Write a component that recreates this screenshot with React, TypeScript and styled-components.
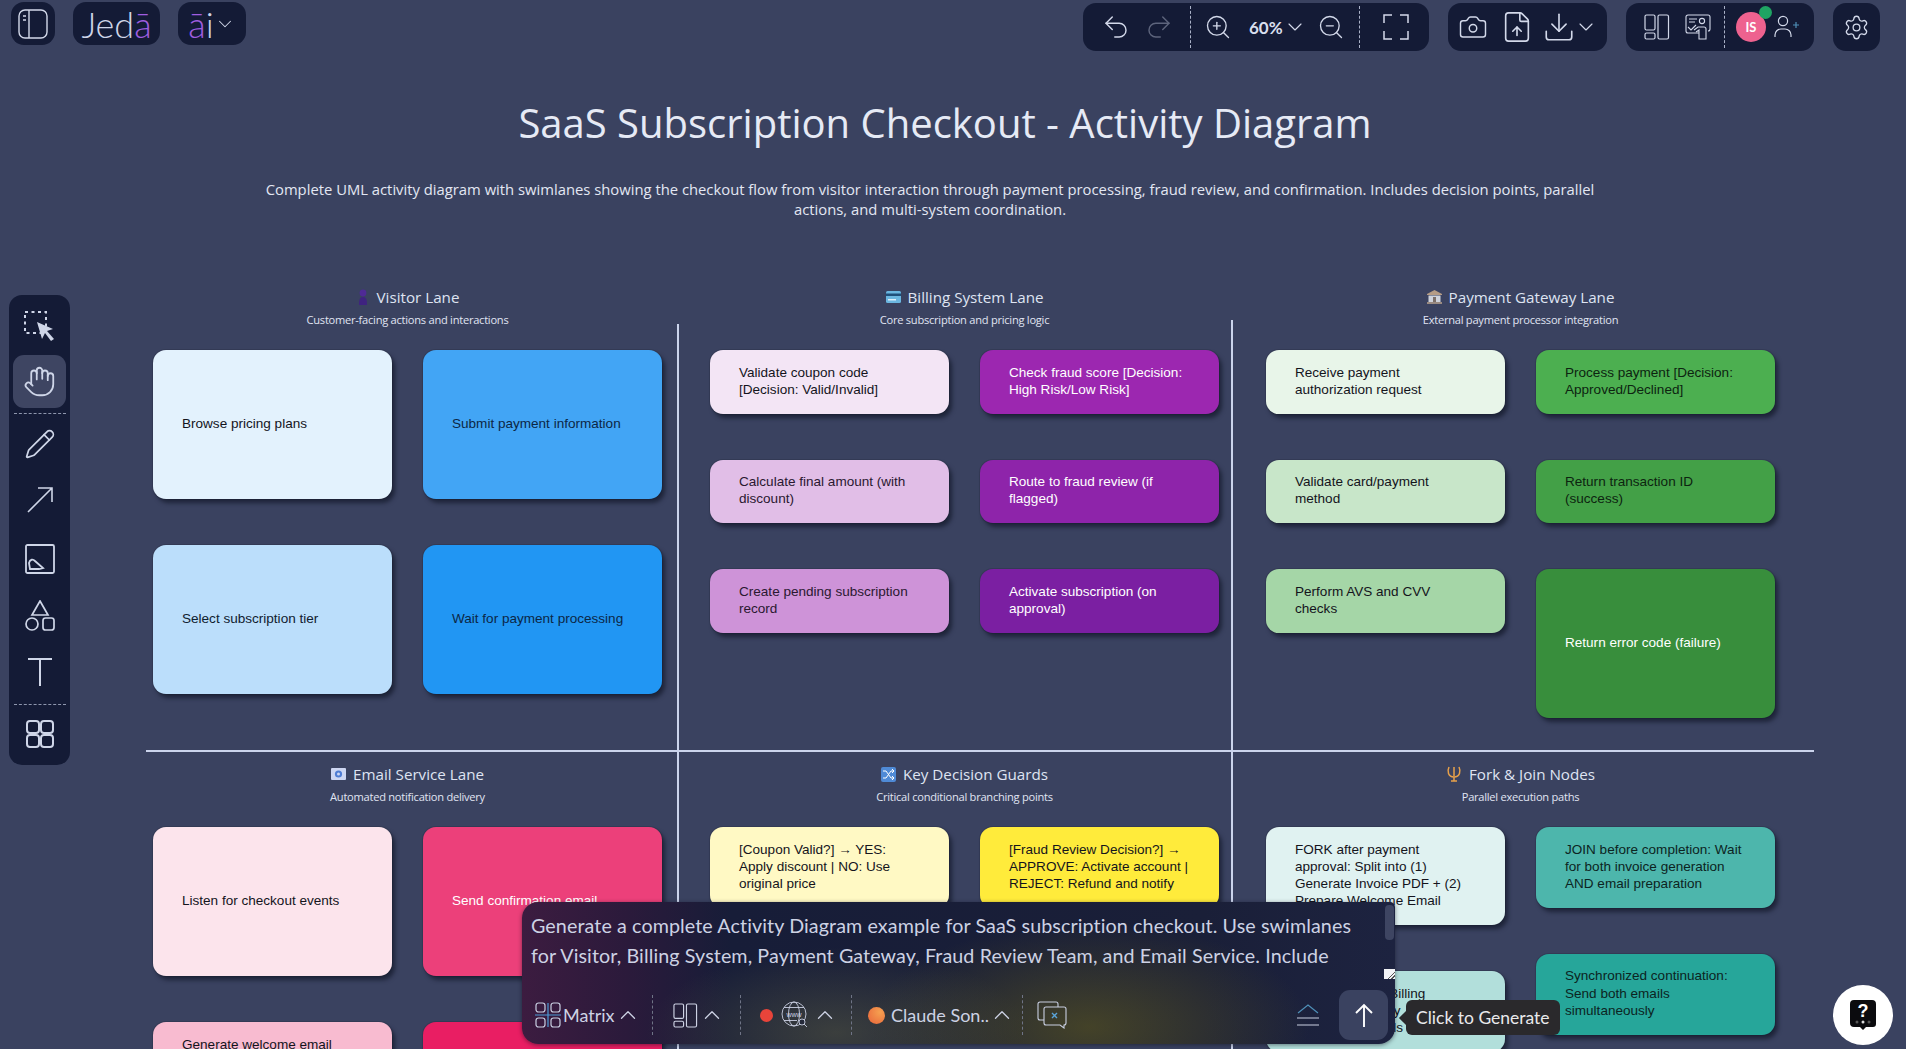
import React from "react";
import styled, { createGlobalStyle } from "styled-components";
import {
  Undo2, Redo2, ZoomIn, ZoomOut, ChevronDown, ChevronUp, Camera, FileUp, Download,
  Settings, Pencil, Hand,
} from "lucide-react";

const Global = createGlobalStyle`
  html, body { margin: 0; padding: 0; height: 100%; overflow: hidden; background: #3a4260; }
  * { box-sizing: border-box; }
`;

const Page = styled.div`
  position: relative;
  width: 1906px;
  height: 1049px;
  overflow: hidden;
  background: #3a4260;
  font-family: "Open Sans", "Liberation Sans", sans-serif;
`;

const TopBar = styled.header`
  display: flex;
  justify-content: space-between;
  align-items: flex-start;
  height: 54px;
  padding: 2px 26px 0 11px;
`;

const BarSide = styled.div<{ $gap: number }>`
  display: flex;
  align-items: flex-start;
  gap: ${(p) => p.$gap}px;
`;

const BarTile = styled.div<{ $w: number; $tall?: boolean }>`
  display: flex;
  align-items: center;
  justify-content: center;
  width: ${(p) => p.$w}px;
  height: ${(p) => (p.$tall ? 48 : 43)}px;
  margin-top: ${(p) => (p.$tall ? 1 : 0)}px;
  border-radius: 13px;
  background: #141b36;
  color: #d3d9ea;
`;

const BrandText = styled.span`
  font-family: Lato, "Open Sans", sans-serif;
  font-weight: 300;
  font-size: 36px;
  line-height: 1;
  color: #cfd5e8;
`;

const Accent = styled.span`
  color: #a05ee0;
`;

const BarPanel = styled.div<{ $w: number }>`
  display: flex;
  align-items: center;
  width: ${(p) => p.$w}px;
  height: 48px;
  margin-top: 1px;
  border-radius: 13px;
  background: #141b36;
  color: #d3d9ea;
`;

const Slot = styled.span<{ $ml?: number; $dim?: boolean }>`
  display: flex;
  align-items: center;
  flex: none;
  margin-left: ${(p) => p.$ml ?? 0}px;
  color: ${(p) => (p.$dim ? "#5d647c" : "inherit")};
`;

const BarDivider = styled.i<{ $ml: number }>`
  align-self: stretch;
  margin: 3px 0 3px ${(p) => p.$ml}px;
  border-left: 1px dashed #aab2c8;
`;

const Zoom = styled.span`
  flex: none;
  width: 34px;
  margin-left: 17px;
  font-family: Lato, "Open Sans", sans-serif;
  font-weight: 700;
  font-size: 17px;
  color: #d9dfee;
`;

const AvatarWrap = styled.div`
  position: relative;
  display: flex;
  align-items: center;
  justify-content: center;
  flex: none;
  width: 30px;
  height: 30px;
  margin-left: 11px;
  border-radius: 50%;
  background: #ee628f;
  color: #fff;
  font-family: Lato, sans-serif;
  font-weight: 700;
  font-size: 13px;
`;

const OnlineDot = styled.i`
  position: absolute;
  top: -6px;
  right: -6px;
  width: 13px;
  height: 13px;
  border-radius: 50%;
  background: #1fa463;
`;

const Heading = styled.h1`
  margin: 42px 16px 0 0;
  text-align: center;
  font-weight: 400;
  font-size: 40px;
  line-height: 54px;
  color: #e6eaf5;
`;

const Lead = styled.p`
  width: 1430px;
  margin: 29px 0 0 215px;
  text-align: center;
  font-size: 14.8px;
  line-height: 20px;
  color: #e3e7f3;
  white-space: pre-line;
`;

const Diagram = styled.main`
  display: grid;
  grid-template-columns: 533px 554px 581px;
  grid-template-rows: 479px auto;
  margin: 54px 0 0 146px;
  width: 1668px;
`;

const Lane = styled.section<{ $top?: boolean; $rule?: boolean }>`
  display: flex;
  flex-direction: column;
  border-bottom: ${(p) => (p.$top ? "2px solid #cbd4ec" : "none")};
  border-right: ${(p) => (p.$rule ? "2px solid #cbd4ec" : "none")};
  height: ${(p) => (p.$top ? "auto" : "320px")};
`;

const LaneHead = styled.div<{ $inset: number; $offset: number }>`
  width: ${(p) => p.$inset + 509}px;
  padding: ${(p) => p.$offset}px 0 0 ${(p) => p.$inset}px;
  text-align: center;
`;

const LaneName = styled.h2`
  display: flex;
  align-items: center;
  justify-content: center;
  gap: 7px;
  margin: 0;
  font-weight: 400;
  font-size: 15.2px;
  line-height: 22px;
  color: #dfe4f2;
`;

const LaneNote = styled.p`
  margin: 3px 0 0;
  font-size: 11.1px;
  line-height: 18px;
  letter-spacing: -0.25px;
  color: #e0e5f3;
`;

const LaneBody = styled.div<{ $inset: number; $ruleGap: number; $cardTop: number; $rule?: boolean }>`
  display: grid;
  grid-template-columns: 239px 239px;
  column-gap: 31px;
  align-items: start;
  flex: 1;
  margin-top: ${(p) => p.$cardTop - p.$ruleGap}px;
  padding: ${(p) => p.$ruleGap}px 0 0 ${(p) => p.$inset}px;
  border-right: ${(p) => (p.$rule ? "2px solid #cbd4ec" : "none")};
`;

const CardColumn = styled.div`
  display: flex;
  flex-direction: column;
  gap: 46px;
`;

const Card = styled.div<{ $bg: string; $fg?: string; $tall?: boolean }>`
  display: flex;
  align-items: center;
  flex: none;
  min-height: ${(p) => (p.$tall ? "149px" : "auto")};
  padding: 13.5px 29px 15.5px;
  border-radius: 13px;
  background: ${(p) => p.$bg};
  color: ${(p) => p.$fg ?? "#14141c"};
  box-shadow: 3px 4px 4px rgba(12, 16, 32, 0.6), 0 0 0 1px rgba(20, 20, 30, 0.14);
  font-family: "Liberation Sans", Arial, sans-serif;
  font-size: 13.55px;
  line-height: 17.3px;
  white-space: pre-line;
`;

const ToolRail = styled.nav`
  position: absolute;
  left: 9px;
  top: 295px;
  display: flex;
  flex-direction: column;
  align-items: center;
  width: 61px;
  height: 470px;
  padding-top: 6px;
  border-radius: 13px;
  background: #141b36;
  color: #cfd6e8;
`;

const Tool = styled.div<{ $h: number; $active?: boolean; $mt?: number }>`
  display: flex;
  align-items: center;
  justify-content: center;
  width: 53px;
  height: ${(p) => p.$h}px;
  margin-top: ${(p) => p.$mt ?? 0}px;
  border-radius: 11px;
  background: ${(p) => (p.$active ? "#3e4562" : "transparent")};
`;

const RailDivider = styled.i<{ $top: number }>`
  width: 52px;
  margin-top: ${(p) => p.$top}px;
  border-top: 1px dashed #8e96ad;
`;

const Prompt = styled.form`
  position: absolute;
  left: 522px;
  top: 902px;
  width: 873px;
  height: 142px;
  border-radius: 16px 5px 16px 16px;
  background:
    radial-gradient(ellipse 220px 105px at 65% 88%, rgba(96, 90, 30, 0.6), transparent),
    radial-gradient(ellipse 190px 85px at 36% 92%, rgba(88, 90, 66, 0.55), transparent),
    linear-gradient(90deg, #3c1c40 0%, #2b1a3b 12%, #171d38 24%, #1a1f38 78%, #1d2340 100%);
  box-shadow: 0 1px 4px rgba(10, 12, 24, 0.5);
  color: #cdd2e4;
  font-family: Lato, "Open Sans", sans-serif;
`;

const PromptText = styled.p`
  height: 82px;
  margin: 0;
  padding: 9px 0 0 9px;
  font-size: 19.7px;
  line-height: 30px;
  letter-spacing: 0.1px;
  white-space: pre-line;
`;

const ScrollThumb = styled.i`
  position: absolute;
  right: 1px;
  top: 3px;
  width: 9px;
  height: 35px;
  border-radius: 4px;
  background: #3e4562;
`;

const Resizer = styled.i`
  position: absolute;
  right: 0;
  top: 67px;
  width: 11px;
  height: 10px;
  background:
    linear-gradient(135deg, transparent 62%, #555 62%, #555 70%, transparent 70%, transparent 80%, #555 80%, #555 88%, transparent 88%),
    #f2f3f6;
`;

const PromptBar = styled.div`
  display: flex;
  align-items: center;
  height: 60px;
  padding: 2px 7px 0 13px;
`;

const BarLabel = styled.span<{ $ml: number }>`
  flex: none;
  margin-left: ${(p) => p.$ml}px;
  font-size: 18px;
  color: #cdd2e4;
  white-space: nowrap;
`;

const PromptGroup = styled.div<{ $w: number }>`
  display: flex;
  align-items: center;
  flex: none;
  width: ${(p) => p.$w}px;
`;

const PromptDivider = styled.i`
  flex: none;
  height: 40px;
  margin-right: 14px;
  border-left: 1px dashed #6f7486;
`;

const Spacer = styled.div`
  flex: 1;
`;

const ColorDot = styled.i<{ $size: number; $bg: string; $ml: number }>`
  flex: none;
  width: ${(p) => p.$size}px;
  height: ${(p) => p.$size}px;
  margin-left: ${(p) => p.$ml}px;
  border-radius: 50%;
  background: ${(p) => p.$bg};
`;

const SendButton = styled.button`
  display: flex;
  align-items: center;
  justify-content: center;
  width: 49px;
  height: 50px;
  margin-left: 20px;
  padding: 0;
  border: none;
  border-radius: 11px;
  background: #3a4260;
  color: #fff;
`;

const Tip = styled.div`
  position: absolute;
  left: 1406px;
  top: 1000px;
  display: flex;
  align-items: center;
  width: 154px;
  height: 35px;
  padding-left: 10px;
  border-radius: 6px;
  background: #2a292c;
  color: #e9e9ec;
  font-family: Lato, "Open Sans", sans-serif;
  font-size: 17.5px;
  white-space: nowrap;
  &::before {
    content: "";
    position: absolute;
    left: -5px;
    top: 13px;
    width: 10px;
    height: 10px;
    background: #2a292c;
    transform: rotate(45deg);
  }
`;

const Help = styled.div`
  position: absolute;
  left: 1833px;
  top: 985px;
  display: flex;
  align-items: center;
  justify-content: center;
  width: 60px;
  height: 60px;
  border-radius: 50%;
  background: #fff;
`;

const S = 1.15;

const SidebarIcon = () => (
  <svg width="30" height="30" viewBox="0 0 30 30" fill="none" stroke="currentColor" strokeWidth="1.4">
    <rect x="1" y="1" width="28" height="28" rx="6" />
    <path d="M11 1v28M5 7h3M5 11h3" />
  </svg>
);
const Fullscreen = () => (
  <svg width="26" height="26" viewBox="0 0 26 26" fill="none" stroke="currentColor" strokeWidth="1.5">
    <path d="M1 9V1h8M17 1h8v8M25 17v8h-8M9 25H1v-8" />
  </svg>
);
const LayoutIcon = ({ size = 26 }: { size?: number }) => (
  <svg width={size} height={size} viewBox="0 0 26 26" fill="none" stroke="currentColor" strokeWidth="1.2">
    <rect x="1" y="1" width="10" height="15" rx="1.5" />
    <rect x="1" y="19" width="10" height="6" rx="1.5" />
    <rect x="14" y="1" width="10.5" height="24" rx="1.5" />
  </svg>
);
const Presenter = () => (
  <svg width="26" height="26" viewBox="0 0 26 26" fill="none" stroke="currentColor" strokeWidth="1.1">
    <path d="M14 19H3a2 2 0 0 1-2-2V3a2 2 0 0 1 2-2h20a2 2 0 0 1 2 2v12a2 2 0 0 1-2 2" />
    <path d="M4 5h8M4 8h6M3 13l3 3 5-5" />
    <circle cx="17" cy="7" r="2.6" />
    <path d="M9 16l4-3 3 0h3a2 2 0 0 1 2 2v10h-7v-9l-3 2" />
  </svg>
);
const AddUser = () => (
  <svg width="25" height="24" viewBox="0 0 25 24" fill="none" stroke="currentColor" strokeWidth="1.2">
    <circle cx="9" cy="6" r="4.6" />
    <path d="M1 22v-2a6 6 0 0 1 6-6h4a6 6 0 0 1 6 6v2" />
    <path d="M19 10h6M22 7v6" stroke="#4f90b8" />
  </svg>
);
const SelectTool = () => (
  <svg width="32" height="32" viewBox="0 0 32 32" fill="none">
    <rect x="1" y="1" width="21" height="21" stroke="currentColor" strokeWidth="2" strokeDasharray="3 3.5" />
    <path d="M13 11l16 7-6 2 7 8-3 2-6-8-3 6z" fill="currentColor" />
  </svg>
);
const ArrowTool = () => (
  <svg width="28" height="28" viewBox="0 0 28 28" fill="none" stroke="currentColor" strokeWidth="1.6">
    <path d="M2 26L26 2M12 2h14v14" />
  </svg>
);
const ImageTool = () => (
  <svg width="30" height="30" viewBox="0 0 30 30" fill="none" stroke="currentColor" strokeWidth="1.8">
    <rect x="1" y="1" width="28" height="28" rx="1.5" />
    <path d="M4 19c1-4 4-4 6-2l8 7-4 1H5z" />
  </svg>
);
const ShapesTool = () => (
  <svg width="30" height="32" viewBox="0 0 30 32" fill="none" stroke="currentColor" strokeWidth="1.7">
    <path d="M15 1l8 14H7z" />
    <circle cx="7" cy="24" r="6" />
    <rect x="18" y="18" width="11" height="12" rx="2.5" />
  </svg>
);
const TextTool = () => (
  <svg width="26" height="30" viewBox="0 0 26 30" fill="none" stroke="currentColor" strokeWidth="2">
    <path d="M1 2h24M13 2v27" />
  </svg>
);
const GridTool = () => (
  <svg width="28" height="28" viewBox="0 0 28 28" fill="none" stroke="currentColor" strokeWidth="2">
    <rect x="1" y="1" width="12" height="12" rx="3" />
    <rect x="15" y="1" width="12" height="12" rx="3" />
    <rect x="1" y="15" width="12" height="12" rx="3" />
    <rect x="15" y="15" width="12" height="12" rx="3" />
  </svg>
);
const MatrixIcon = () => (
  <svg width="26" height="26" viewBox="0 0 26 26" fill="none" stroke="#c9cfe2" strokeWidth="1.2">
    <rect x="1" y="1" width="9" height="9" rx="2.5" />
    <rect x="16" y="1" width="9" height="9" rx="2.5" />
    <rect x="1" y="16" width="9" height="9" rx="2.5" />
    <rect x="16" y="16" width="9" height="9" rx="2.5" />
    <path d="M13 1v24M0 13h26" stroke="#4d9bd6" />
  </svg>
);
const WebIcon = () => (
  <svg width="28" height="28" viewBox="0 0 28 28" fill="none" stroke="#c9cfe2" strokeWidth="0.9">
    <circle cx="13" cy="13" r="12" />
    <ellipse cx="13" cy="13" rx="5.5" ry="12" />
    <path d="M3 6.5h20M3 19.5h13" />
    <text x="13" y="15.5" fontSize="7" textAnchor="middle" fill="#c9cfe2" stroke="none" fontFamily="Liberation Sans">www</text>
    <circle cx="21" cy="21" r="3" fill="#252a3a" />
    <path d="M23 23l3 3" />
  </svg>
);
const ChatX = () => (
  <svg width="30" height="28" viewBox="0 0 30 28" fill="none" stroke="#c9cfe2" strokeWidth="1.1">
    <path d="M7 19H3a2 2 0 0 1-2-2V3a2 2 0 0 1 2-2h16a2 2 0 0 1 2 2v3" />
    <path d="M9 6h18a2 2 0 0 1 2 2v14a2 2 0 0 1-2 2v3l-4-3H9a2 2 0 0 1-2-2V8a2 2 0 0 1 2-2z" />
    <path d="M15 12l5 5M20 12l-5 5" stroke="#5aa3d8" strokeWidth="1.4" />
  </svg>
);
const Stack = () => (
  <svg width="22" height="24" viewBox="0 0 22 24" fill="none" strokeWidth="1.2">
    <path d="M1 10l10-8 10 8" stroke="#4f90b8" />
    <path d="M0 15h22M0 22h22" stroke="#c9cfe2" />
  </svg>
);
const SendArrow = () => (
  <svg width="18" height="25" viewBox="0 0 18 25" fill="none" stroke="currentColor" strokeWidth="1.9">
    <path d="M9 24V2M1 10l8-8 8 8" />
  </svg>
);
const HelpIcon = () => (
  <svg width="26" height="30" viewBox="0 0 26 30">
    <path d="M4 0h18a4 4 0 0 1 4 4v20a3 3 0 0 1-3 3h-7l-3 3-3-3H4a4 4 0 0 1-4-4V4a4 4 0 0 1 4-4z" fill="#0b0b0e" />
    <text x="13" y="17" fontSize="18" fontWeight="700" textAnchor="middle" fill="#fff" fontFamily="Liberation Sans">?</text>
    <circle cx="7" cy="22" r="1.5" fill="#555" />
    <circle cx="13" cy="22" r="1.5" fill="#ddd" />
    <circle cx="19" cy="22" r="1.5" fill="#555" />
  </svg>
);

const VisitorGlyph = () => (
  <svg width="14" height="16" viewBox="0 0 14 16">
    <circle cx="7" cy="4" r="3.4" fill="#4f2a96" />
    <path d="M3 16c0-6 1-8 4-8s4 2 4 8z" fill="#3f2380" />
  </svg>
);
const CardGlyph = () => (
  <svg width="15" height="12" viewBox="0 0 15 12">
    <rect width="15" height="12" rx="1.5" fill="#6bb6e0" />
    <rect y="2.5" width="15" height="2.5" fill="#1f4f7a" />
    <rect x="2" y="8" width="8" height="1.5" fill="#dceefa" />
  </svg>
);
const BankGlyph = () => (
  <svg width="15" height="14" viewBox="0 0 15 14">
    <path d="M7.5 0L15 4v1H0V4z" fill="#b59c86" />
    <rect x="1.5" y="5.5" width="12" height="6.5" fill="#cfd3dc" />
    <rect x="6" y="7" width="3" height="5" fill="#7c6f69" />
    <rect y="12" width="15" height="2" fill="#9a8b82" />
  </svg>
);
const MailGlyph = () => (
  <svg width="15" height="12" viewBox="0 0 15 12">
    <rect width="15" height="12" rx="1" fill="#cdd6f2" />
    <circle cx="7.5" cy="6" r="3.6" fill="#4f7dd4" />
    <circle cx="7.5" cy="6" r="1.5" fill="#cdd6f2" />
  </svg>
);
const ShuffleGlyph = () => (
  <svg width="15" height="15" viewBox="0 0 15 15" fill="none">
    <rect width="15" height="15" rx="2" fill="#4f8ad6" />
    <path d="M2 4h3l5 7h3M2 11h3l5-7h3M11 2l2 2-2 2M11 9l2 2-2 2" stroke="#fff" strokeWidth="1" />
  </svg>
);
const TridentGlyph = () => (
  <svg width="16" height="16" viewBox="0 0 16 16" fill="none" stroke="#e8a14a" strokeWidth="1.5">
    <path d="M8 1v9M3 1C1 5 2 11 8 11s7-6 5-10M5 15h6M8 11v4" />
  </svg>
);

type CardDef = { t: string; bg: string; fg?: string; tall?: boolean };
type LaneDef = {
  name: string;
  note: string;
  glyph: React.ReactNode;
  inset: number;
  rule?: boolean;
  top?: boolean;
  ruleGap: number;
  cols: CardDef[][];
};

const W = "#ffffff";
const NAVY = "#0c2746";

const lanes: LaneDef[] = [
  {
    name: "Visitor Lane", note: "Customer-facing actions and interactions", glyph: <VisitorGlyph />, inset: 7, rule: true, top: true, ruleGap: 26,
    cols: [
      [{ t: "Browse pricing plans", bg: "#e3f2fd", tall: true }, { t: "Select subscription tier", bg: "#bbdefb", fg: "#10202f", tall: true }],
      [{ t: "Submit payment information", bg: "#42a5f5", fg: NAVY, tall: true }, { t: "Wait for payment processing", bg: "#2196f3", fg: NAVY, tall: true }],
    ],
  },
  {
    name: "Billing System Lane", note: "Core subscription and pricing logic", glyph: <CardGlyph />, inset: 31, rule: true, top: true, ruleGap: 30,
    cols: [
      [
        { t: "Validate coupon code\n[Decision: Valid/Invalid]", bg: "#f3e5f5" },
        { t: "Calculate final amount (with\ndiscount)", bg: "#e1bee7", fg: "#2a1830" },
        { t: "Create pending subscription\nrecord", bg: "#ce93d8", fg: "#2a1830" },
      ],
      [
        { t: "Check fraud score [Decision:\nHigh Risk/Low Risk]", bg: "#9c27b0", fg: W },
        { t: "Route to fraud review (if\nflagged)", bg: "#8e24aa", fg: W },
        { t: "Activate subscription (on\napproval)", bg: "#7b1fa2", fg: W },
      ],
    ],
  },
  {
    name: "Payment Gateway Lane", note: "External payment processor integration", glyph: <BankGlyph />, inset: 33, top: true, ruleGap: 26,
    cols: [
      [
        { t: "Receive payment\nauthorization request", bg: "#e8f5e9" },
        { t: "Validate card/payment\nmethod", bg: "#c8e6c9" },
        { t: "Perform AVS and CVV\nchecks", bg: "#a5d6a7" },
      ],
      [
        { t: "Process payment [Decision:\nApproved/Declined]", bg: "#4caf50", fg: "#0d2410" },
        { t: "Return transaction ID\n(success)", bg: "#43a047", fg: "#0d2410" },
        { t: "Return error code (failure)", bg: "#388e3c", fg: W, tall: true },
      ],
    ],
  },
  {
    name: "Email Service Lane", note: "Automated notification delivery", glyph: <MailGlyph />, inset: 7, rule: true, ruleGap: 20,
    cols: [
      [{ t: "Listen for checkout events", bg: "#fce4ec", tall: true }, { t: "Generate welcome email\ncontent with\nsubscription details\nand onboarding links", bg: "#f8bbd0" }],
      [{ t: "Send confirmation email", bg: "#ec407a", fg: W, tall: true }, { t: "Send invoice email", bg: "#e91e63", fg: W, tall: true }],
    ],
  },
  {
    name: "Key Decision Guards", note: "Critical conditional branching points", glyph: <ShuffleGlyph />, inset: 31, rule: true, ruleGap: 20,
    cols: [
      [
        { t: "[Coupon Valid?] → YES:\nApply discount | NO: Use\noriginal price", bg: "#fff9c4" },
        { t: "[Paid?] → YES: Continue\n| NO: Show error and\nretry", bg: "#fff59d" },
      ],
      [
        { t: "[Fraud Review Decision?] →\nAPPROVE: Activate account |\nREJECT: Refund and notify", bg: "#ffeb3b" },
        { t: "[Risk Score?] → HIGH: Route\nto review | LOW: Continue\nto activation", bg: "#fdd835" },
      ],
    ],
  },
  {
    name: "Fork & Join Nodes", note: "Parallel execution paths", glyph: <TridentGlyph />, inset: 33, ruleGap: 20,
    cols: [
      [
        { t: "FORK after payment\napproval: Split into (1)\nGenerate Invoice PDF + (2)\nPrepare Welcome Email", bg: "#e0f2f1" },
        { t: "Parallel update Billing\nUpdate Company\ncustomer's details", bg: "#b2dfdb" },
      ],
      [
        { t: "JOIN before completion: Wait\nfor both invoice generation\nAND email preparation", bg: "#4db6ac", fg: "#0c2422" },
        { t: "Synchronized continuation:\nSend both emails\nsimultaneously", bg: "#26a69a", fg: "#0c2422" },
      ],
    ],
  },
];

export default function App() {
  return (
    <Page>
      <Global />
      <TopBar>
        <BarSide $gap={18}>
          <BarTile $w={44}><SidebarIcon /></BarTile>
          <BarTile $w={87}>
            <BrandText>Jed<Accent>ā</Accent></BrandText>
          </BarTile>
          <BarTile $w={68}>
            <BrandText><Accent>ā</Accent>i</BrandText>
            <ChevronDown size={22} strokeWidth={S} />
          </BarTile>
        </BarSide>
        <BarSide $gap={19}>
          <BarPanel $w={346}>
            <Slot $ml={18}><Undo2 size={30} strokeWidth={S} /></Slot>
            <Slot $ml={13} $dim><Redo2 size={30} strokeWidth={S} /></Slot>
            <BarDivider $ml={16} />
            <Slot $ml={13}><ZoomIn size={28} strokeWidth={S} /></Slot>
            <Zoom>60%</Zoom>
            <Slot><ChevronDown size={24} strokeWidth={S} /></Slot>
            <Slot $ml={10}><ZoomOut size={28} strokeWidth={S} /></Slot>
            <BarDivider $ml={14} />
            <Slot $ml={23}><Fullscreen /></Slot>
          </BarPanel>
          <BarPanel $w={159}>
            <Slot $ml={10}><Camera size={30} strokeWidth={S} /></Slot>
            <Slot $ml={12}><FileUp size={34} strokeWidth={S} /></Slot>
            <Slot $ml={8}><Download size={34} strokeWidth={S} /></Slot>
            <Slot $ml={-2}><ChevronDown size={24} strokeWidth={S} /></Slot>
          </BarPanel>
          <BarPanel $w={188}>
            <Slot $ml={18}><LayoutIcon /></Slot>
            <Slot $ml={15}><Presenter /></Slot>
            <BarDivider $ml={13} />
            <AvatarWrap>IS<OnlineDot /></AvatarWrap>
            <Slot $ml={8}><AddUser /></Slot>
          </BarPanel>
          <BarTile $w={47} $tall>
            <Settings size={27} strokeWidth={S} />
          </BarTile>
        </BarSide>
      </TopBar>

      <Heading>SaaS Subscription Checkout - Activity Diagram</Heading>
      <Lead>
        {"Complete UML activity diagram with swimlanes showing the checkout flow from visitor interaction through payment processing, fraud review, and confirmation. Includes decision points, parallel\nactions, and multi-system coordination."}
      </Lead>

      <Diagram>
        {lanes.map((l) => (
          <Lane key={l.name} $top={l.top} $rule={!l.top && l.rule}>
            <LaneHead $inset={l.inset} $offset={l.top ? 13 : 11}>
              <LaneName>{l.glyph}{l.name}</LaneName>
              <LaneNote>{l.note}</LaneNote>
            </LaneHead>
            <LaneBody $inset={l.inset} $ruleGap={l.ruleGap} $cardTop={21} $rule={l.top && l.rule}>
              {l.cols.map((col, i) => (
                <CardColumn key={i}>
                  {col.map((c) => (
                    <Card key={c.t} $bg={c.bg} $fg={c.fg} $tall={c.tall}>{c.t}</Card>
                  ))}
                </CardColumn>
              ))}
            </LaneBody>
          </Lane>
        ))}
      </Diagram>

      <ToolRail>
        <Tool $h={52}><SelectTool /></Tool>
        <Tool $h={53} $active $mt={2}><Hand size={33} strokeWidth={1.3} /></Tool>
        <RailDivider $top={5} />
        <Tool $h={52} $mt={4}><Pencil size={32} strokeWidth={1.3} /></Tool>
        <Tool $h={60}><ArrowTool /></Tool>
        <Tool $h={58}><ImageTool /></Tool>
        <Tool $h={56}><ShapesTool /></Tool>
        <Tool $h={56}><TextTool /></Tool>
        <RailDivider $top={4} />
        <Tool $h={58}><GridTool /></Tool>
      </ToolRail>

      <Prompt>
        <PromptText>
          {"Generate a complete Activity Diagram example for SaaS subscription checkout. Use swimlanes\nfor Visitor, Billing System, Payment Gateway, Fraud Review Team, and Email Service. Include"}
        </PromptText>
        <ScrollThumb />
        <Resizer />
        <PromptBar>
          <PromptGroup $w={117}>
            <MatrixIcon />
            <BarLabel $ml={2}>Matrix</BarLabel>
            <ChevronUp size={26} strokeWidth={1.2} />
          </PromptGroup>
          <PromptDivider />
          <PromptGroup $w={73}>
            <Slot $ml={6}><LayoutIcon size={25} /></Slot>
            <Slot $ml={1}><ChevronUp size={26} strokeWidth={1.2} /></Slot>
          </PromptGroup>
          <PromptDivider />
          <PromptGroup $w={96}>
            <ColorDot $size={13} $bg="#e8443a" $ml={5} />
            <Slot $ml={8}><WebIcon /></Slot>
            <Slot $ml={3}><ChevronUp size={26} strokeWidth={1.2} /></Slot>
          </PromptGroup>
          <PromptDivider />
          <PromptGroup $w={156}>
            <ColorDot $size={17} $bg="radial-gradient(circle at 70% 30%, #f5a050, #e8643a)" $ml={2} />
            <BarLabel $ml={6}>Claude Son..</BarLabel>
            <ChevronUp size={26} strokeWidth={1.2} />
          </PromptGroup>
          <PromptDivider />
          <ChatX />
          <Spacer />
          <Stack />
          <SendButton type="button"><SendArrow /></SendButton>
        </PromptBar>
      </Prompt>
      <Tip>Click to Generate</Tip>

      <Help><HelpIcon /></Help>
    </Page>
  );
}
